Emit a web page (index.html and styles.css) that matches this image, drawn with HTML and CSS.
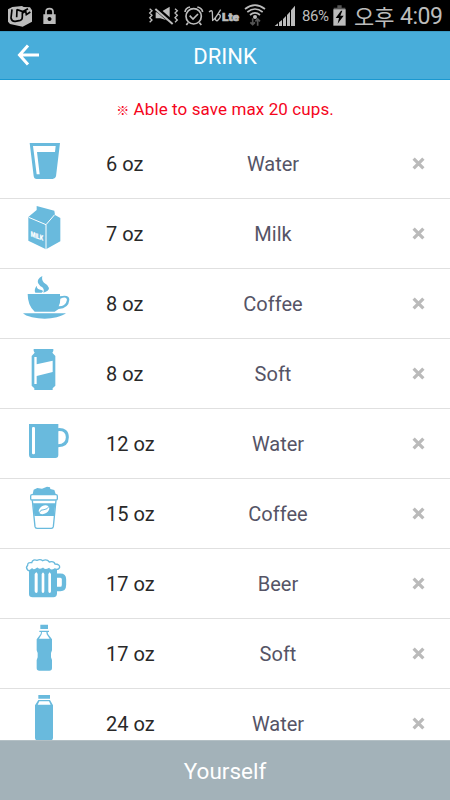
FILE: index.html
```html
<!DOCTYPE html>
<html lang="en">
<head>
<meta charset="utf-8">
<title>Drink</title>
<link rel="stylesheet" href="styles.css">
</head>
<body>
<div class="screen">
  <div class="status">
    <svg class="status-left" viewBox="0 0 180 93">
      <path fill="#bcbcbc" d="M37 21 66 18 71 21 90 22 96 31 96 65 68 80 30 72 24 65V28Z"/>
      <path fill="none" stroke="#000" stroke-width="5" d="M36 28 33 54Q35 65 46 64L61 61Q67 59 67 50V34L51 29M51 28 50 52M67 40 77 33 79 44 91 36M66 36 84 26"/>
      <path fill="none" stroke="#bcbcbc" stroke-width="5" d="M138 46V35Q138 26 148.500 26T159 35V46"/>
      <path fill="#bcbcbc" fill-rule="evenodd" d="M130 43H167V72H130ZM148.500 51a6 6 0 1 0 .1 0Z"/>
    </svg>
    <svg class="status-icons" viewBox="0 0 480 93">
      <g fill="#bcbcbc">
        <path d="M47 37H61L89 20V64L61 55H47Z"/>
        <path fill="none" stroke="#000" stroke-width="14" d="M47 24 101 71"/>
        <path fill="none" stroke="#bcbcbc" stroke-width="6" d="M46 27 98 72"/>
        <path fill="none" stroke="#bcbcbc" stroke-width="4" d="M29 26 36 32 29 39 36 46 29 53 36 60 29 67M105 26 112 32 105 39 112 46 105 53 112 60 105 67"/>
        <g fill="none" stroke="#bcbcbc" stroke-width="5"><circle cx="161" cy="49" r="23"/><path d="M149 47 159 57 174 42M144 68 139 75M178 68 184 75M135 36Q136 24 150 21M172 21Q186 24 188 36"/></g>
        <path fill="none" stroke="#bcbcbc" stroke-width="4" d="M207 36Q217 28 217 37L218 61Q224 59 242 29M235 42Q223 53 227 60T240 53Q243 44 236 43"/>
        <text class="lte" x="246" y="63" textLength="51" lengthAdjust="spacingAndGlyphs">Lte</text>
        <path fill="none" stroke="#bcbcbc" stroke-width="5" d="M315 27Q345 4 375 27M322 36Q345 18 368 36M330 45Q345 32 360 45"/>
        <circle cx="345" cy="51" r="6"/>
        <path fill="none" stroke="#555" stroke-width="5" d="M338 55V73M331 67 338 74 345 67M353 77V58M346 64 353 57 360 64"/>
        <path d="M404 78 414 70V78ZM417 67 426 60V78H417ZM429 57 438 48V78H429ZM441 45 450 35V78H441ZM453 31 465 17V78H453Z"/>
      </g>
    </svg>
    <span class="percent">86%</span>
    <svg class="battery" viewBox="0 0 39 93"><path fill="#555" d="M13 16H26V23H37V30H2V23H13Z"/><path fill="#bcbcbc" d="M1 28H38V77H1Z"/><path d="M24 32 8 54H18L14 71 32 47H22L28 32Z"/></svg>
    <span class="ampm">오후</span>
    <span class="clock">4:09</span>
  </div>
  <header class="header">
    <svg class="back" viewBox="0 0 24 24"><path d="M22 12H3M11 2.500 2.500 12 11 21.500"/></svg>
    <h1>DRINK</h1>
  </header>
  <main class="list">
    <p class="notice"><span class="mark">※</span> Able to save max 20 cups.</p>
    <div class="row">
      <svg class="icon" viewBox="0 -3 318 207"><path d="M89 39H180L168 139Q166 147 158 147H110Q102 147 101 138Z"/><path class="w" d="M99 48H167L165 66H111L119 133H110Z"/></svg>
      <span class="size">6 oz</span><span class="name">Water</span><svg class="close" viewBox="0 0 12 12"><path d="M1.500 1.500 10.500 10.500M10.500 1.500 1.500 10.500"/></svg>
    </div>
    <div class="row">
      <svg class="icon" viewBox="0 207 318 207"><path d="M110 228 163 242 165 255 181 264V334L138 358 85 332V261L110 240Z"/><path class="l" d="M86 262 138 284 164 254M138 284V357"/><text class="milk" transform="matrix(1 .34 0 1 92 319)" x="0" y="0" textLength="37" lengthAdjust="spacingAndGlyphs">MILK</text></svg>
      <span class="size">7 oz</span><span class="name">Milk</span><svg class="close" viewBox="0 0 12 12"><path d="M1.500 1.500 10.500 10.500M10.500 1.500 1.500 10.500"/></svg>
    </div>
    <div class="row">
      <svg class="icon" viewBox="0 12 318 207"><path d="M83 87H180V94Q208 88 208 104 206 130 176 132L164 140H104Q83 122 83 87Z"/><path class="w" d="M181 101Q199 92 201 104 198 123 176 124 181 114 181 101Z"/><path d="M69 145H198Q190 151 170 157 135 165 96 157 75 152 69 145ZM127 33Q110 42 114 54 119 63 127 67 134 74 130 83 147 78 147 69 144 59 132 53 124 46 127 33ZM110 62Q101 75 106 83H125Q133 78 124 75 110 73 110 62Z"/></svg>
      <span class="size">8 oz</span><span class="name">Coffee</span><svg class="close" viewBox="0 0 12 12"><path d="M1.500 1.500 10.500 10.500M10.500 1.500 1.500 10.500"/></svg>
    </div>
    <div class="row">
      <svg class="icon" viewBox="0 222 318 207"><path d="M101 252H160V258L157 263 166 273V362L158 370V375H103V370L95 362V273L104 263 101 258Z"/><path class="w" d="M103 276H110V298L158 287V321L110 333V357H103Z"/></svg>
      <span class="size">8 oz</span><span class="name">Soft</span><svg class="close" viewBox="0 0 12 12"><path d="M1.500 1.500 10.500 10.500M10.500 1.500 1.500 10.500"/></svg>
    </div>
    <div class="row wide">
      <svg class="icon" viewBox="0 -3 318 207"><path d="M87 42H175V135Q175 144 166 144H97Q87 144 87 134Z"/><path class="s" stroke-width="9" d="M174 59Q202 57 202 82T174 107"/><rect class="w" x="96" y="51" width="9" height="82" rx="4"/></svg>
      <span class="size">12 oz</span><span class="name">Water</span><svg class="close" viewBox="0 0 12 12"><path d="M1.500 1.500 10.500 10.500M10.500 1.500 1.500 10.500"/></svg>
    </div>
    <div class="row wide">
      <svg class="icon" viewBox="0 207 318 207"><path d="M98 252 101 239 112 234 126 236 141 230 150 232 151 237 163 240 167 252Z"/><rect class="s" x="92" y="254" width="80" height="16" rx="4" stroke-width="4"/><path class="s" stroke-width="4" d="M97 271 105 350Q106 355 111 355H154Q159 355 160 350L168 271"/><path d="M99 280H166L162 318H103Z"/><ellipse class="w" cx="132" cy="299" rx="17" ry="12" transform="rotate(-32 132 299)"/><path class="s" stroke-width="3" d="M118 308Q121 298 132 299 143 298 147 289"/></svg>
      <span class="size">15 oz</span><span class="name">Coffee</span><svg class="close" viewBox="0 0 12 12"><path d="M1.500 1.500 10.500 10.500M10.500 1.500 1.500 10.500"/></svg>
    </div>
    <div class="row wide">
      <svg class="icon" viewBox="0 12 318 207"><path d="M87 70H171V145Q171 157 160 157H98Q87 157 87 147Z"/><path class="s" stroke-width="13" d="M168 92H181Q192 92 192 103V119Q192 132 181 132H168"/><path class="w o" d="M83 75Q76 68 83 61 82 51 95 53 99 41 111 46 121 41 128 47 141 41 148 51 162 47 165 57 180 58 179 67 176 76 164 72 154 79 147 71 135 77 129 70 119 77 112 70 101 79 96 72 88 80 83 75Z"/><path class="w" d="M104 87 107 83 110 82 113 87V139Q113 144 109 144T104 139ZM125 87 129 82 133 87V139Q133 144 129 144T125 139ZM145 87 149 82 153 87V139Q153 144 149 144T145 139Z"/></svg>
      <span class="size">17 oz</span><span class="name">Beer</span><svg class="close" viewBox="0 0 12 12"><path d="M1.500 1.500 10.500 10.500M10.500 1.500 1.500 10.500"/></svg>
    </div>
    <div class="row wide">
      <svg class="icon" viewBox="0 222 318 207"><path d="M121 239H144V252H121ZM118 257H147V261H143L144 267 156 283V316L153 324V337L156 345V369Q156 377 148 377H118Q110 377 110 369V345L113 337V324L110 316V283L122 267 123 261H118Z"/><path class="w" d="M126 261H139L140 268 149 281H117L125 268Z"/></svg>
      <span class="size">17 oz</span><span class="name">Soft</span><svg class="close" viewBox="0 0 12 12"><path d="M1.500 1.500 10.500 10.500M10.500 1.500 1.500 10.500"/></svg>
    </div>
    <div class="row wide">
      <svg class="icon" viewBox="0 27 318 207"><path d="M115 45H150V56H115ZM115 60H150L159 76V173Q159 181 151 181H113Q105 181 105 173V76Z"/><path class="w" d="M118 64H147L152 74H113Z"/></svg>
      <span class="size">24 oz</span><span class="name">Water</span><svg class="close" viewBox="0 0 12 12"><path d="M1.500 1.500 10.500 10.500M10.500 1.500 1.500 10.500"/></svg>
    </div>
  </main>
  <footer class="footer">Yourself</footer>
</div>
</body>
</html>
```

FILE: styles.css
```css
* { box-sizing: border-box; }
body { margin: 0; background: #fff; font-family: Roboto, "Noto Sans CJK KR", sans-serif; }
svg { display: block; flex: none; }
.screen { display: flex; flex-direction: column; width: 450px; height: 800px; overflow: hidden; }
.status { display: flex; flex: none; height: 31px; background: #000; color: #bcbcbc; white-space: nowrap; }
.status-left { width: 60px; height: 31px; margin-right: 80px; }
.status-icons { width: 160px; height: 31px; }
.lte { font: 900 30px Roboto, sans-serif; stroke: #bcbcbc; stroke-width: 2px; }
.percent { width: 31px; margin-left: 2px; font-size: 15px; line-height: 33px; letter-spacing: -0.4px; }
.battery { width: 13px; height: 31px; }
.ampm { width: 45px; margin-left: 8px; font: 400 22px/30px "Noto Sans CJK KR", sans-serif; }
.clock { font-size: 23px; line-height: 33px; letter-spacing: -0.5px; margin-left: 1px; }
.header { display: flex; flex: none; align-items: center; height: 49px; padding: 0 16px; background: #48adda; border-top: 1px solid #3d9cc6; border-bottom: 1px solid #1b98d0; color: #fff; }
.back { width: 24px; height: 24px; margin: 0 0 1px 1px; fill: none; stroke: #fff; stroke-width: 3; }
.header h1 { flex: 1; margin: 3px 25px 0 0; font-size: 22px; line-height: 26px; font-weight: 400; text-align: center; }
.list { flex: 1; min-height: 0; overflow: hidden; }
.notice { height: 49px; margin: 0; padding-top: 17px; color: #f5051c; font-size: 17px; line-height: 24px; letter-spacing: 0.1px; text-align: center; white-space: nowrap; }
.mark { font-size: 13px; font-weight: 500; }
.row { display: flex; align-items: center; height: 70px; border-bottom: 1px solid #e0e0e0; font-size: 20px; line-height: 24px; }
.icon { width: 106px; height: 69px; fill: #69badd; }
.icon .w { fill: #fff; }
.icon .l { fill: none; stroke: #fff; stroke-width: 3; }
.icon .s { fill: none; stroke: #69badd; }
.icon .o { stroke: #69badd; stroke-width: 4; }
.milk { font: 900 21px Roboto, sans-serif; fill: #fff; stroke: #fff; stroke-width: 0.6px; }
.size { width: 94px; color: #292929; }
.wide .size { width: 99px; }
.name { width: 146px; color: #555466; text-align: center; }
.close { width: 13px; height: 13px; margin: 0 25px 1px auto; fill: none; stroke: #bababa; stroke-width: 3; }
.footer { flex: none; height: 60px; border-top: 1px solid #b4c0c5; background: #a3b2b9; color: #fff; font-size: 22.500px; line-height: 61px; text-align: center; }
```
